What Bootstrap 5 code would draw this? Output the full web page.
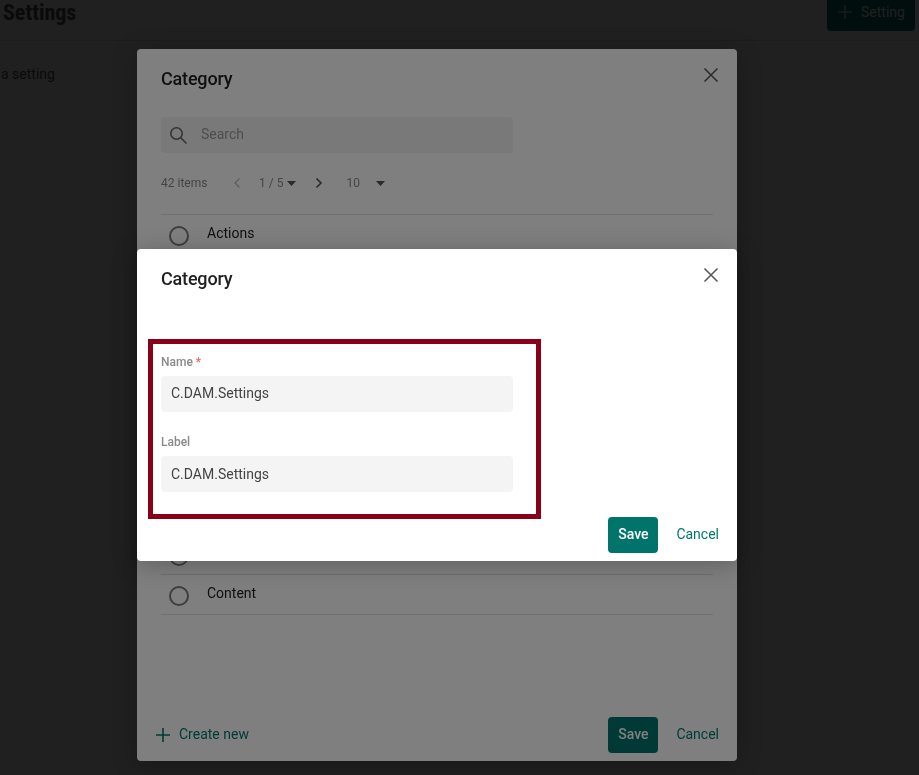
<!DOCTYPE html>
<html lang="en">
<head>
<meta charset="utf-8">
<title>Settings</title>
<link href="https://cdn.jsdelivr.net/npm/bootstrap@5.3.0/dist/css/bootstrap.min.css" rel="stylesheet">
<style>
html,body{height:100%;overflow:hidden}
body{font-family:Roboto,"Liberation Sans",sans-serif;font-size:14px;color:#212121;background:#fff}
.page-head{height:41px;border-bottom:1px solid #e0e0e0;padding:0 4px 0 3px;overflow:hidden}
.page-title{font-size:22px;font-weight:700;line-height:24px;margin:1px 0 0;color:#555;font-stretch:condensed}
.add-btn{margin-top:-5px;height:36px;width:88px;background:#00736a;color:#fff;border:0;border-radius:4px;font-size:14px;padding:0 10px 2px 10px;gap:8px}
.add-btn svg{opacity:.7}
.page-body{padding:25px 0 0 1px;color:#555;line-height:16px}
.scrim{position:fixed;inset:0}
.scrim-deep{background:rgba(0,0,0,.75)}
.scrim-half{background:rgba(0,0,0,.5)}
.dlg{position:absolute;left:137px;width:600px;background:#fff;border-radius:4px;padding:0 18px 8px 24px;box-shadow:0 4px 24px rgba(0,0,0,.25)}
.dlg-back{top:49px;height:712px}
.dlg-front{top:249px;height:312px}
.dlg-head{height:60px}
.dlg-title{font-size:18px;font-weight:500;line-height:60px;margin:0;color:#212121;letter-spacing:-.01em}
.x-btn{position:absolute;top:18px;right:18px;width:16px;height:16px;background:none;border:0;padding:0;line-height:0;color:#555}
.search-box{width:352px;height:36px;margin-top:8px;background:#f3f3f3;border-radius:4px;padding-left:8px;gap:13px;color:#9b9b9b}
.search-text{margin-bottom:2px}
.pager{height:20px;margin-top:20px;font-size:12px;color:#8a8a8a}
.pg-count{width:72px}
.pg-now{margin-left:18px}
.pg-next{margin-left:19px}
.pg-size{margin-left:23px;width:26px}
.pg-caret{margin-left:4px}
.pick-list{width:552px;margin-top:21px;border-top:1px solid #dedede}
.pick-row{height:40px;border-bottom:1px solid #dedede;padding-left:8px;gap:18px}
.pick-ring{width:20px;height:20px;border:2px solid #7c7c7c;border-radius:50%;margin-top:11px;flex:none}
.pick-name{line-height:16px;margin-top:10px}
.dlg-foot{height:36px}
.dlg-back .dlg-foot{position:absolute;left:18px;right:18px;bottom:8px}
.make-new{color:#00776c;gap:8px;padding:0 0 2px;border:0;background:none;font-size:14px}
.make-new svg{margin-top:2px}
.save-btn{width:50px;height:36px;padding:0 0 2px;border:0;border-radius:4px;background:#00736a;color:#fff;font-size:14px;font-weight:500}
.save-btn:hover{background:#00736a;color:#fff}
.cancel-btn{padding:0 0 2px;border:0;color:#00776c;font-size:14px;text-decoration:none;margin-left:18px}
.red-frame{width:393px;height:180px;margin:30px 0 0 -13px;border:5px solid #8a0018;padding:10px 8px 8px}
.fld-label{display:block;font-size:12px;font-weight:500;line-height:16px;color:#8a8a8a;margin:0 0 6px}
.fld-label .req{color:#f06a6a}
.fld-input.form-control{width:352px;height:36px;background:#f4f4f4;border:0;border-radius:4px;padding:0 10px;font-size:14px;color:#444;box-shadow:none}
.fld-input.fld-first{padding-bottom:2px}
.fld-gap{margin-top:22px}
.dlg-front .dlg-foot{margin-top:-2px}
</style>
</head>
<body>
<div class="page-head d-flex justify-content-between align-items-start">
  <h1 class="page-title">Settings</h1>
  <button class="add-btn d-flex align-items-center" type="button">
    <svg width="16" height="16" viewBox="0 0 16 16" fill="none" stroke="currentColor" stroke-width="1.6"><path d="M8 1v14M1 8h14"/></svg>
    <span>Setting</span>
  </button>
</div>
<div class="page-body">a setting</div>

<div class="scrim scrim-deep"></div>

<div class="dlg dlg-back">
  <div class="dlg-head"><h2 class="dlg-title">Category</h2></div>
  <button class="x-btn" type="button" aria-label="Close"><svg width="16" height="16" viewBox="0 0 16 16" fill="none" stroke="currentColor" stroke-width="1.5"><path d="M1.5 1.5l13 13M14.5 1.5l-13 13"/></svg></button>
  <div class="search-box d-flex align-items-center">
    <svg width="19" height="19" viewBox="0 0 19 19" fill="none" stroke="#666" stroke-width="1.6"><circle cx="7.5" cy="7.5" r="5.7"/><path d="M11.8 11.8l5.7 5.7"/></svg>
    <span class="search-text">Search</span>
  </div>
  <div class="pager d-flex align-items-center">
    <span class="pg-count">42 items</span>
    <svg width="8" height="12" viewBox="0 0 8 12" fill="none" stroke="#bdbdbd" stroke-width="1.4"><path d="M6.5 1.5L2 6l4.5 4.5"/></svg>
    <span class="pg-now">1 / 5</span>
    <svg class="pg-caret" width="9" height="5" viewBox="0 0 9 5" fill="#555"><path d="M0 0h9L4.5 5z"/></svg>
    <svg class="pg-next" width="8" height="12" viewBox="0 0 8 12" fill="none" stroke="#555" stroke-width="1.6"><path d="M1.5 1.5L6 6l-4.5 4.5"/></svg>
    <span class="pg-size">10</span>
    <svg class="pg-caret" width="9" height="5" viewBox="0 0 9 5" fill="#555"><path d="M0 0h9L4.5 5z"/></svg>
  </div>
  <div class="pick-list">
    <div class="pick-row d-flex"><span class="pick-ring"></span><span class="pick-name">Actions</span></div>
    <div class="pick-row d-flex"></div>
    <div class="pick-row d-flex"></div>
    <div class="pick-row d-flex"></div>
    <div class="pick-row d-flex"></div>
    <div class="pick-row d-flex"></div>
    <div class="pick-row d-flex"></div>
    <div class="pick-row d-flex"></div>
    <div class="pick-row d-flex"><span class="pick-ring"></span></div>
    <div class="pick-row d-flex"><span class="pick-ring"></span><span class="pick-name">Content</span></div>
  </div>
  <div class="dlg-foot d-flex align-items-center justify-content-between">
    <button class="make-new d-flex align-items-center" type="button">
      <svg width="16" height="16" viewBox="0 0 16 16" fill="none" stroke="currentColor" stroke-width="1.6"><path d="M8 1v14M1 8h14"/></svg>
      <span>Create new</span>
    </button>
    <div class="d-flex align-items-center">
      <button class="btn save-btn" type="button">Save</button>
      <a class="btn btn-link cancel-btn" href="#">Cancel</a>
    </div>
  </div>
</div>

<div class="scrim scrim-half"></div>

<div class="dlg dlg-front">
  <div class="dlg-head"><h2 class="dlg-title">Category</h2></div>
  <button class="x-btn" type="button" aria-label="Close"><svg width="16" height="16" viewBox="0 0 16 16" fill="none" stroke="currentColor" stroke-width="1.5"><path d="M1.5 1.5l13 13M14.5 1.5l-13 13"/></svg></button>
  <form class="red-frame">
    <label class="fld-label" for="fName">Name <span class="req">*</span></label>
    <input class="form-control fld-input fld-first" id="fName" value="C.DAM.Settings">
    <label class="fld-label fld-gap" for="fLabel">Label</label>
    <input class="form-control fld-input" id="fLabel" value="C.DAM.Settings">
  </form>
  <div class="dlg-foot d-flex align-items-center justify-content-end">
    <button class="btn save-btn" type="button">Save</button>
    <a class="btn btn-link cancel-btn" href="#">Cancel</a>
  </div>
</div>
<script src="https://cdn.jsdelivr.net/npm/bootstrap@5.3.0/dist/js/bootstrap.bundle.min.js"></script>
</body>
</html>
